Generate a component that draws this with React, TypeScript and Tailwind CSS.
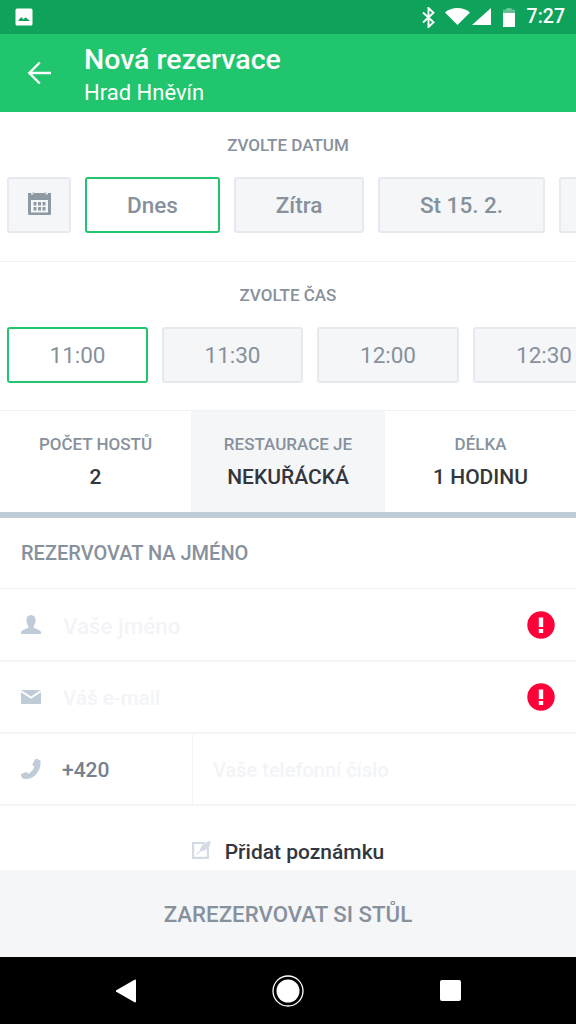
import React from "react";

const font = { fontFamily: "Roboto, 'Noto Sans', sans-serif" };

function Chip({ w, active, children }: { w: string; active?: boolean; children?: React.ReactNode }) {
  return (
    <div
      className={`${w} h-[56px] shrink-0 flex items-center justify-center pt-[2px] rounded-[3px] border-2 text-[22.500px] font-medium text-[#87919c] ${
        active ? "border-[#20c56d] bg-white" : "border-[#e6eaf0] bg-[#f4f6f8]"
      }`}
    >
      {children}
    </div>
  );
}

function Alert() {
  return (
    <svg width="28" height="28" viewBox="0 0 28 28" className="shrink-0">
      <circle cx="14" cy="14" r="13.7" fill="#ff0038" />
      <rect x="11.8" y="6.5" width="4.4" height="9.5" fill="#fff" />
      <rect x="11.8" y="18" width="4.4" height="4" fill="#fff" />
    </svg>
  );
}

export default function App() {
  return (
    <div style={font} className="w-[576px] h-[1024px] flex flex-col overflow-hidden bg-white">
      {/* status bar */}
      <div className="h-[34px] shrink-0 bg-[#0ea25a] flex items-center pl-[15px] pr-[11px] text-white">
        <svg width="18" height="18" viewBox="0 0 18 18" fill="none">
          <rect width="17" height="17" x="0.5" y="0.5" rx="1.5" fill="#fff" />
          <path d="M3 13l3.2-4 2.300 2.600 2-2.300L15 13z" fill="#0ea25a" />
        </svg>
        <div className="flex-1" />
        <svg width="13" height="21" viewBox="0 0 13 21" fill="none" stroke="#fff" strokeWidth="1.900" className="mr-[10px]">
          <path d="M1 5.500l10.500 9.800-5 4.700V1l5 4.700L1 15.500" />
        </svg>
        <svg width="25" height="17" viewBox="0 0 25 17" className="mb-[1px]">
          <path d="M0 4.500C3.300 1.700 7.500 0 12.500 0S21.700 1.700 25 4.500L12.500 17z" fill="#fff" />
        </svg>
        <svg width="19" height="17" viewBox="0 0 19 17" className="mr-[12px] ml-[2px] mb-[1px]">
          <path d="M19 0v17H0z" fill="#fff" />
        </svg>
        <svg width="12" height="19" viewBox="0 0 12 19" className="mr-[12px]">
          <rect x="3.500" y="0" width="5" height="2" fill="#fff" fillOpacity="0.35" />
          <rect x="0" y="1.500" width="12" height="3.500" fill="#fff" fillOpacity="0.35" />
          <rect x="0" y="5" width="12" height="14" fill="#fff" />
        </svg>
        <span className="text-[19.500px] leading-none font-medium">7:27</span>
      </div>

      {/* app bar */}
      <div className="h-[78px] shrink-0 bg-[#20c56d] flex items-center text-white">
        <div className="w-[84px] shrink-0 flex pl-[27px]">
          <svg width="24" height="24" viewBox="0 0 24 24" fill="none" stroke="#fff" strokeWidth="2.400">
            <path d="M24 12H2.500M12.800 1.500L2.300 12l10.500 10.500" />
          </svg>
        </div>
        <div className="flex flex-col pt-[2px]">
          <span className="text-[28.500px] leading-[32px] font-medium">Nová rezervace</span>
          <span className="text-[22px] leading-[24px] mt-[5px]">Hrad Hněvín</span>
        </div>
      </div>

      {/* date */}
      <div className="h-[150px] shrink-0 border-b border-[#eff1f4]">
        <div className="text-center text-[17px] font-medium leading-[20px] text-[#87919c] pt-[23px]">ZVOLTE DATUM</div>
        <div className="flex gap-[14px] pl-[7px] mt-[22px] overflow-hidden">
          <Chip w="w-[64px]">
            <svg width="23" height="23" viewBox="0 0 23 23" className="mb-[5px]">
              <path d="M0 1h4V0h2v1h11V0h2v1h4v21a1 1 0 0 1-1 1H1a1 1 0 0 1-1-1z" fill="#8f99a4" />
              <rect x="3" y="0" width="2.500" height="2.500" fill="#f4f6f8" fillOpacity="0.8" />
              <rect x="17.500" y="0" width="2.500" height="2.500" fill="#f4f6f8" fillOpacity="0.8" />
              <rect x="3" y="8" width="17" height="12.500" fill="#f4f6f8" />
              <g fill="#8f99a4">
                <rect x="5.500" y="10" width="3" height="3.500" />
                <rect x="10" y="10" width="3" height="3.500" />
                <rect x="14.500" y="10" width="3" height="3.500" />
                <rect x="5.500" y="15" width="3" height="3.500" />
                <rect x="10" y="15" width="3" height="3.500" />
                <rect x="14.500" y="15" width="3" height="3.500" />
              </g>
            </svg>
          </Chip>
          <Chip w="w-[135px]" active>Dnes</Chip>
          <Chip w="w-[130px]">Zítra</Chip>
          <Chip w="w-[167px]">St 15. 2.</Chip>
          <div className="w-[167px] h-[56px] shrink-0 rounded-[3px] border-2 border-[#e6eaf0] bg-[#f4f6f8]" />
        </div>
      </div>

      {/* time */}
      <div className="h-[149px] shrink-0 border-b border-[#eff1f4]">
        <div className="text-center text-[17px] font-medium leading-[20px] text-[#87919c] pt-[23px]">ZVOLTE ČAS</div>
        <div className="flex gap-[14px] pl-[7px] mt-[22px] overflow-hidden">
          <Chip w="w-[141px]" active><span className="font-normal">11:00</span></Chip>
          <Chip w="w-[141px]"><span className="font-normal">11:30</span></Chip>
          <Chip w="w-[142px]"><span className="font-normal">12:00</span></Chip>
          <Chip w="w-[142px]"><span className="font-normal">12:30</span></Chip>
        </div>
      </div>

      {/* info row */}
      <div className="h-[101px] shrink-0 flex text-center">
        {[
          { w: "w-[191px]", a: "POČET HOSTŮ", b: "2", bg: "" },
          { w: "w-[194px]", a: "RESTAURACE JE", b: "NEKUŘÁCKÁ", bg: "bg-[#f4f6f8]" },
          { w: "flex-1", a: "DÉLKA", b: "1 HODINU", bg: "" },
        ].map((c) => (
          <div key={c.a} className={`${c.w} ${c.bg} flex flex-col items-center pt-[22px]`}>
            <span className="text-[17px] leading-[22px] font-medium text-[#87919c]">{c.a}</span>
            <span className="text-[21px] leading-[24px] mt-[10px] font-medium text-[#33373d]">{c.b}</span>
          </div>
        ))}
      </div>
      <div className="h-[6px] shrink-0 bg-[#c0cbd8]" />

      {/* form */}
      <div className="h-[71px] shrink-0 flex items-center pl-[21px] text-[20px] font-medium text-[#87919c] border-b border-[#eff1f4]">
        REZERVOVAT NA JMÉNO
      </div>
      <div className="h-[73px] shrink-0 flex items-center pl-[21px] pr-[21px] border-b-2 border-[#f3f5f7]">
        <svg width="20" height="20" viewBox="0 0 20 20" className="shrink-0">
          <path d="M10 0c3 0 4.600 2.200 4.600 5S13 10.500 12.500 11.500c0 1.200 1 1.800 3 2.600 2.500 1 4.500 1.700 4.500 3.400V19H0v-1.500c0-1.700 2-2.400 4.500-3.400 2-.8 3-1.400 3-2.600C7 10.500 5.400 7.800 5.400 5S7 0 10 0z" fill="#c0cbd8" />
        </svg>
        <span className="ml-[22px] flex-1 pt-[5px] text-[22.400px] font-medium text-[#f2f4f7]">Vaše jméno</span>
        <Alert />
      </div>
      <div className="h-[72px] shrink-0 flex items-center pl-[21px] pr-[21px] border-b-2 border-[#f3f5f7]">
        <svg width="20" height="14" viewBox="0 0 20 14" className="shrink-0">
          <path d="M0 0h20L10 6.500z" fill="#c0cbd8" />
          <path d="M0 2.300l10 6.400 10-6.400V14H0z" fill="#c0cbd8" />
        </svg>
        <span className="ml-[22px] flex-1 pt-[3px] text-[20.600px] font-medium text-[#f2f4f7]">Váš e-mail</span>
        <Alert />
      </div>
      <div className="h-[72px] shrink-0 flex items-stretch border-b-2 border-[#f3f5f7]">
        <div className="w-[193px] shrink-0 flex items-center pl-[21px] border-r border-[#f3f5f7]">
          <svg width="20" height="20" viewBox="0 0 20 20" className="shrink-0">
            <path d="M16 0l3.500 1.500c.5 7-2 12-6 15.500-3.500 3-8 3.500-12 2.500L0 16.500c-.2-.8 0-1.300.8-1.700l3.500-1.600c.7-.3 1.200-.1 1.700.4l1.200 1.300c3-1.500 5.300-4.200 6.300-7.300L12 6.800c-.6-.5-.7-1-.5-1.700L14 .6c.4-.6 1.200-.9 2-.6z" fill="#c0cbd8" />
          </svg>
          <span className="ml-[21px] pt-[3px] text-[21px] font-medium text-[#76828e]">+420</span>
        </div>
        <div className="flex-1 flex items-center pl-[20px] pt-[1px] text-[20px] font-medium text-[#f2f4f7]">Vaše telefonní číslo</div>
      </div>

      {/* note */}
      <div className="h-[64px] shrink-0 flex items-end justify-center pb-[2px] text-[21px] font-medium text-[#33373d]">
        <svg width="19" height="18" viewBox="0 0 19 18" className="mr-[14px] mb-[9px]">
          <path d="M0 1h13.500l-2 2H2.200v12.800h12.600V7.500l2.200-2.200V18H0z" fill="#d3dbe5" />
          <path d="M18.500 0c.3 4-2 8-7.500 10l-2.500.5L5 14l-.8-.8L8 9.500 8.500 7C10.500 3 14.500.5 18.500 0z" fill="#d3dbe5" />
        </svg>
        Přidat poznámku
      </div>

      {/* button */}
      <div className="h-[87px] shrink-0 bg-[#f4f6f8] flex items-center justify-center pt-[2px] text-[22.250px] font-medium text-[#87919c]">
        ZAREZERVOVAT SI STŮL
      </div>

      {/* nav */}
      <div className="flex-1 bg-black flex items-center justify-between pl-[116px] pr-[115px]">
        <svg width="20" height="24" viewBox="0 0 20 24">
          <path d="M19 .5a1 1 0 0 1 1 1V22.500a1 1 0 0 1-1 1L.7 13a1 1 0 0 1 0-2z" fill="#fff" />
        </svg>
        <svg width="32" height="32" viewBox="0 0 32 32">
          <circle cx="16" cy="16" r="15" fill="none" stroke="#fff" strokeWidth="1.300" />
          <circle cx="16" cy="16" r="11.500" fill="#fff" />
        </svg>
        <div className="w-[21px] h-[21px] rounded-[2px] bg-white" />
      </div>
    </div>
  );
}
